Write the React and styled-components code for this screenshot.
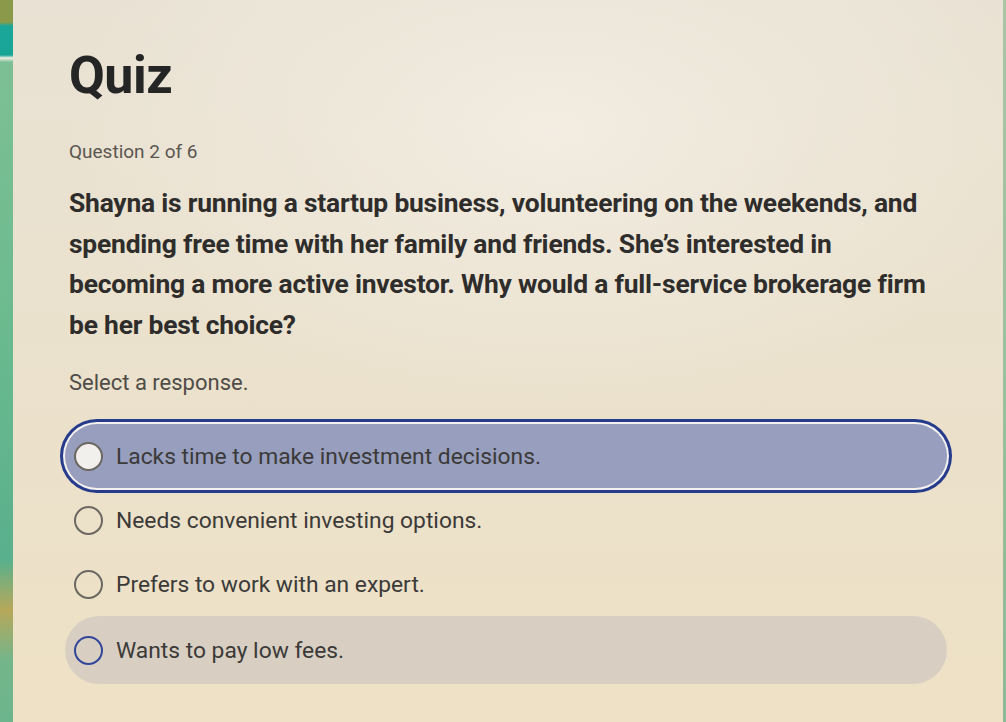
import React, { useState } from 'react';
import styled, { createGlobalStyle } from 'styled-components';

const GlobalStyle = createGlobalStyle`
  html, body {
    margin: 0;
    padding: 0;
    height: 100%;
  }
  body {
    font-family: Roboto, "Noto Sans", Arial, sans-serif;
    background: #ebe1cc;
    overflow: hidden;
  }
`;

const Screen = styled.div`
  display: flex;
  width: 1006px;
  height: 722px;
  background:
    radial-gradient(ellipse 70% 55% at 55% 18%, rgba(243, 238, 228, 0.85), rgba(243, 238, 228, 0) 70%),
    linear-gradient(180deg, #e9e2d4 0%, #ebe1cb 60%, #eee1c5 100%);
`;

const SideStrip = styled.div`
  width: 13px;
  flex-shrink: 0;
  background: linear-gradient(
    180deg,
    #8a9a4a 0px,
    #8a9a4a 22px,
    #1aa79a 26px,
    #19a596 55px,
    #f3efe4 58px,
    #7dbf95 62px,
    #6dbb8f 300px,
    #59b08c 560px,
    #b7a85a 610px,
    #74b58a 660px,
    #6cb58d 722px
  );
`;

const EdgeLine = styled.div`
  width: 3px;
  flex-shrink: 0;
  margin-left: auto;
  background: linear-gradient(180deg, #a9c6a4, #8fb996);
`;

const Content = styled.main`
  display: flex;
  flex-direction: column;
  padding: 44px 0 0 56px;
  width: 890px;
`;

const Title = styled.h1`
  margin: 0;
  font-size: 52px;
  font-weight: 700;
  color: #252525;
  line-height: 64px;
  letter-spacing: -0.5px;
`;

const Counter = styled.div`
  margin-top: 32px;
  font-size: 19px;
  color: #5a5650;
  line-height: 24px;
`;

const Prompt = styled.p`
  margin: 19px 0 0;
  font-size: 26.4px;
  font-weight: 700;
  line-height: 40.5px;
  color: #2e2d2b;
  letter-spacing: -0.2px;
  white-space: nowrap;
`;

const Hint = styled.div`
  margin-top: 25px;
  font-size: 22px;
  color: #4f4c48;
  line-height: 26px;
`;

const Options = styled.div`
  display: flex;
  flex-direction: column;
  margin-top: 28px;
  margin-left: -4px;
  width: 882px;
`;

const Option = styled.button`
  display: flex;
  align-items: center;
  gap: 13px;
  height: ${p => (p.$hover ? '68px' : '64px')};
  padding: 0 0 0 9px;
  border: none;
  border-radius: 34px;
  font-family: inherit;
  font-size: 22.8px;
  color: #3b3a38;
  text-align: left;
  cursor: pointer;
  background: ${p => (p.$selected ? '#979ebe' : p.$hover ? '#d8cfc2' : 'transparent')};
  box-shadow: ${p =>
    p.$selected ? '0 0 0 2px #f4f2ee, 0 0 0 5px #263b8c' : 'none'};
`;

const Radio = styled.span`
  width: 29px;
  height: 29px;
  flex-shrink: 0;
  border-radius: 50%;
  box-sizing: border-box;
  background: ${p => (p.$selected ? '#f2f0ec' : 'transparent')};
  border: 2px solid ${p => (p.$hover ? '#33479a' : '#6c6861')};
`;

const answers = [
  'Lacks time to make investment decisions.',
  'Needs convenient investing options.',
  'Prefers to work with an expert.',
  'Wants to pay low fees.',
];

export default function App() {
  const [selected, setSelected] = useState(0);
  const [hovered, setHovered] = useState(3);

  return (
    <>
      <GlobalStyle />
      <Screen>
        <SideStrip />
        <Content>
          <Title>Quiz</Title>
          <Counter>Question 2 of 6</Counter>
          <Prompt>
            Shayna is running a startup business, volunteering on the weekends, and
            <br />
            spending free time with her family and friends. She’s interested in
            <br />
            becoming a more active investor. Why would a full-service brokerage firm
            <br />
            be her best choice?
          </Prompt>
          <Hint>Select a response.</Hint>
          <Options>
            {answers.map((text, i) => (
              <Option
                key={text}
                $selected={selected === i}
                $hover={hovered === i && selected !== i}
                onClick={() => setSelected(i)}
                onMouseEnter={() => setHovered(i)}
              >
                <Radio $selected={selected === i} $hover={hovered === i && selected !== i} />
                {text}
              </Option>
            ))}
          </Options>
        </Content>
        <EdgeLine />
      </Screen>
    </>
  );
}
